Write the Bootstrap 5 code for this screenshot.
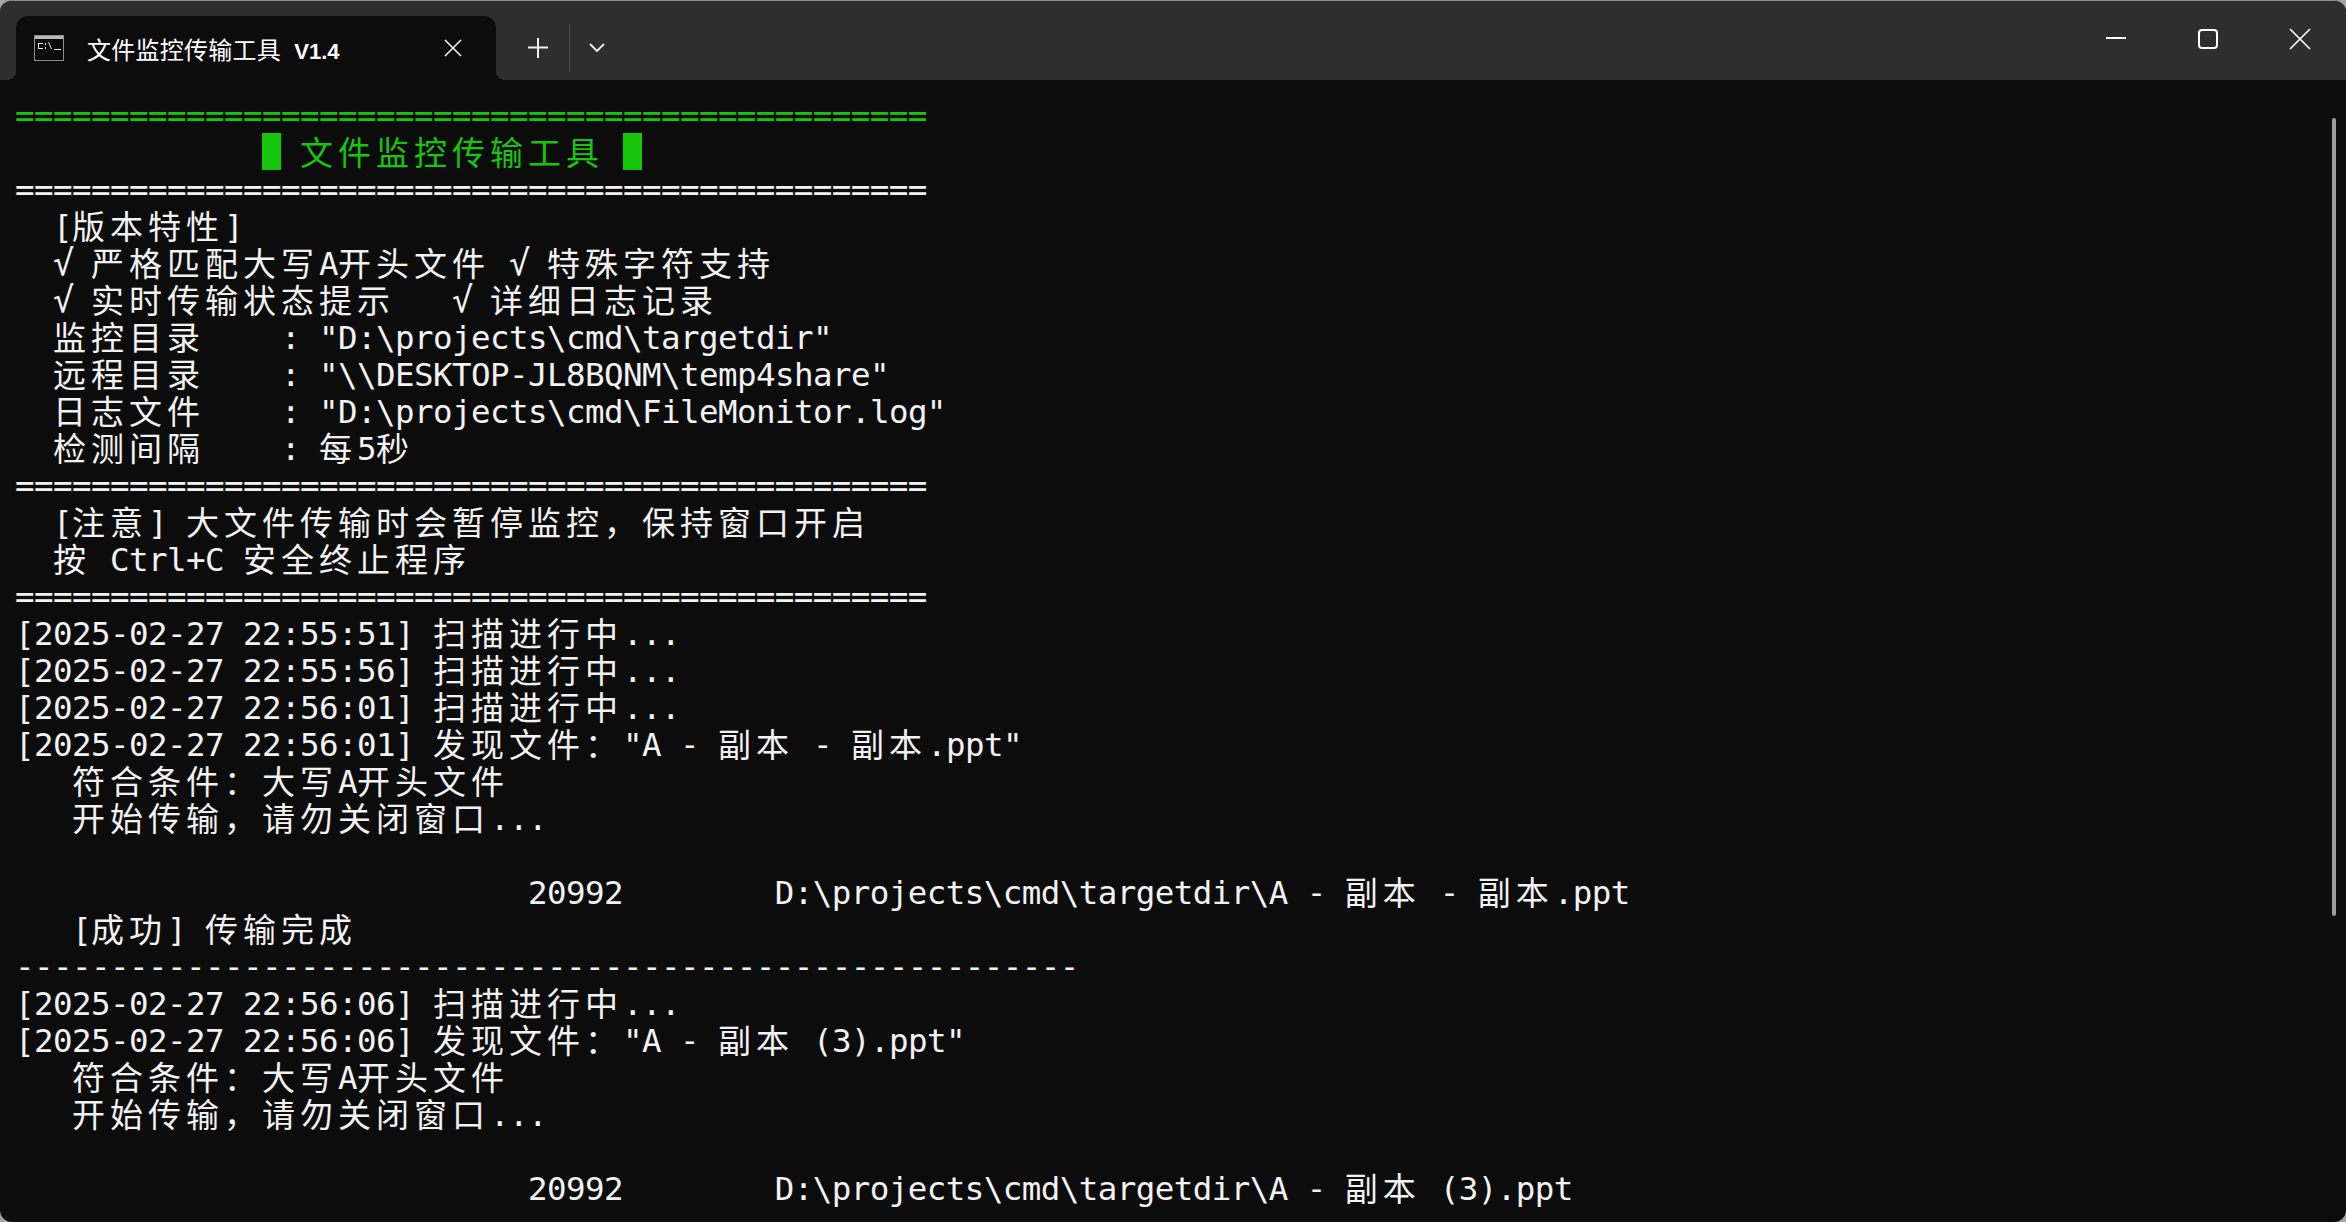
<!DOCTYPE html>
<html lang="zh-CN">
<head>
<meta charset="utf-8">
<title>文件监控传输工具 V1.4</title>
<link rel="stylesheet" href="https://cdn.jsdelivr.net/npm/bootstrap@5.3.0/dist/css/bootstrap.min.css">
<style>
html,body{height:100%;margin:0;background:#a4a4a4;overflow:hidden}
.term-window{width:2346px;height:1222px;background:#0c0c0c;border-top:1px solid #8a8a8a;border-radius:12px;overflow:hidden}
.term-bar{height:79px;background:#2e2e2e;flex:none}
.term-tab{width:480px;height:64px;margin:15px 0 0 16px;background:#0c0c0c;border-radius:12px 12px 0 0;padding-left:18px;color:#fff;font:24px/1 "Noto Sans CJK SC",sans-serif}
.term-tab::before,.term-tab::after{content:"";position:absolute;bottom:0;width:8px;height:8px}
.term-tab::before{left:-8px;background:radial-gradient(circle at 0 0,transparent 7.5px,#0c0c0c 8px)}
.term-tab::after{right:-8px;background:radial-gradient(circle at 100% 0,transparent 7.5px,#0c0c0c 8px)}
.term-tab-title{margin-left:23px;margin-top:3px;white-space:pre;letter-spacing:.25px}
.term-ver{font-family:"Liberation Sans","Noto Sans CJK SC",sans-serif;font-weight:700;font-size:22px;letter-spacing:0;margin-left:2px}
.term-tab-x{margin-left:auto;margin-right:34px}
.term-plus{margin-left:32px;margin-top:9px}
.term-sep{width:1px;height:48px;background:#4a4a4a;margin:23px 0 0 21px}
.term-chev{margin:9px 0 0 19px}
.term-ctrl{margin-left:auto;padding-top:7px}
.term-ctrl svg{display:block;width:92px;height:64px}
.term-body{padding:16px 0 0 15px;font-family:"DejaVu Sans Mono","Noto Sans CJK SC",monospace;font-size:32.5px;letter-spacing:-.57px;color:#f2f2f2}
.ln{display:block;height:37px;line-height:40px;white-space:pre}
.ln i{display:inline-block;vertical-align:top;font:inherit;font-family:"Noto Sans CJK SC",sans-serif;font-size:33px;letter-spacing:5px;line-height:37px;height:37px}
.ln b{display:inline-block;vertical-align:top;width:19px;height:37px;overflow:visible;font-family:"DejaVu Sans Mono",monospace;font-weight:400;font-size:35px;letter-spacing:0;line-height:39px}
.term-green{color:#16c60c}
.term-blk{display:inline-block;width:19px;height:37px;background:#16c60c;vertical-align:top}
.term-thumb{position:absolute;top:117px;right:10px;width:4px;height:798px;background:#9b9b9b;border-radius:2px}
</style>
</head>
<body>
<div class="term-window d-flex flex-column position-relative">
  <div class="term-bar d-flex align-items-start">
    <div class="term-tab d-flex align-items-center position-relative">
      <svg width="30" height="26" viewBox="0 0 30 26"><rect x=".5" y=".5" width="29" height="25" fill="#0a0a0a" stroke="#8f8f8f"/><rect x="1" y="1" width="28" height="3" fill="#b9b9b9"/><path d="M4 8h5v1H4zM4 9h1v4H4zM4 13h5v1H4zM11 8h1v2h-1zM11 12h1v2h-1zM14 7l1 0 3 7h-1zM20 14h7v1h-7z" fill="#e8e8e8"/></svg>
      <span class="term-tab-title">文件监控传输工具  <span class="term-ver">V1.4</span></span>
      <svg class="term-tab-x" width="18" height="18" viewBox="0 0 18 18"><path d="M1 1l16 16M17 1L1 17" stroke="#f0f0f0" stroke-width="1.6" fill="none"/></svg>
    </div>
    <svg class="term-plus" width="20" height="62" viewBox="0 0 20 62"><path d="M10 28v20M0 37.500h20" stroke="#f0f0f0" stroke-width="2" fill="none"/></svg>
    <div class="term-sep"></div>
    <svg class="term-chev" width="16" height="62" viewBox="0 0 16 62"><path d="M1 34l7 7 7-7" stroke="#f0f0f0" stroke-width="1.8" fill="none"/></svg>
    <div class="term-ctrl d-flex">
      <svg viewBox="0 0 92 64"><path d="M36 30h20" stroke="#fff" stroke-width="2"/></svg>
      <svg viewBox="0 0 92 64"><rect x="37" y="22" width="18" height="18" rx="3" fill="none" stroke="#fff" stroke-width="2"/></svg>
      <svg viewBox="0 0 92 64"><path d="M36 21l20 20M56 21L36 41" stroke="#fff" stroke-width="1.6" fill="none"/></svg>
    </div>
  </div>
  <div class="term-body flex-grow-1">
<span class="ln term-green">================================================</span>
<span class="ln term-green">             <span class="term-blk"></span> <i>文件监控传输工具</i> <span class="term-blk"></span></span>
<span class="ln">================================================</span>
<span class="ln">  [<i>版本特性</i>]</span>
<span class="ln">  <b>√</b> <i>严格匹配大写</i>A<i>开头文件</i> <b>√</b> <i>特殊字符支持</i></span>
<span class="ln">  <b>√</b> <i>实时传输状态提示</i>   <b>√</b> <i>详细日志记录</i></span>
<span class="ln">  <i>监控目录</i>    : "D:\projects\cmd\targetdir"</span>
<span class="ln">  <i>远程目录</i>    : "\\DESKTOP-JL8BQNM\temp4share"</span>
<span class="ln">  <i>日志文件</i>    : "D:\projects\cmd\FileMonitor.log"</span>
<span class="ln">  <i>检测间隔</i>    : <i>每</i>5<i>秒</i></span>
<span class="ln">================================================</span>
<span class="ln">  [<i>注意</i>] <i>大文件传输时会暂停监控，保持窗口开启</i></span>
<span class="ln">  <i>按</i> Ctrl+C <i>安全终止程序</i></span>
<span class="ln">================================================</span>
<span class="ln">[2025-02-27 22:55:51] <i>扫描进行中</i>...</span>
<span class="ln">[2025-02-27 22:55:56] <i>扫描进行中</i>...</span>
<span class="ln">[2025-02-27 22:56:01] <i>扫描进行中</i>...</span>
<span class="ln">[2025-02-27 22:56:01] <i>发现文件：</i>"A - <i>副本</i> - <i>副本</i>.ppt"</span>
<span class="ln">   <i>符合条件：大写</i>A<i>开头文件</i></span>
<span class="ln">   <i>开始传输，请勿关闭窗口</i>...</span>
<span class="ln"> </span>
<span class="ln">                           20992        D:\projects\cmd\targetdir\A - <i>副本</i> - <i>副本</i>.ppt</span>
<span class="ln">   [<i>成功</i>] <i>传输完成</i></span>
<span class="ln">--------------------------------------------------------</span>
<span class="ln">[2025-02-27 22:56:06] <i>扫描进行中</i>...</span>
<span class="ln">[2025-02-27 22:56:06] <i>发现文件：</i>"A - <i>副本</i> (3).ppt"</span>
<span class="ln">   <i>符合条件：大写</i>A<i>开头文件</i></span>
<span class="ln">   <i>开始传输，请勿关闭窗口</i>...</span>
<span class="ln"> </span>
<span class="ln">                           20992        D:\projects\cmd\targetdir\A - <i>副本</i> (3).ppt</span>
  </div>
  <div class="term-thumb"></div>
</div>
<script src="https://cdn.jsdelivr.net/npm/bootstrap@5.3.0/dist/js/bootstrap.bundle.min.js"></script>
</body>
</html>
